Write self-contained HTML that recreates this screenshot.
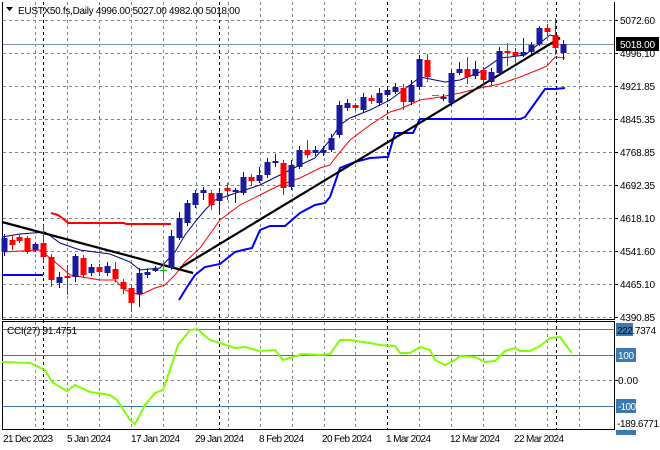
<!DOCTYPE html>
<html><head><meta charset="utf-8"><style>
html,body{margin:0;padding:0;background:#fff;width:660px;height:450px;overflow:hidden}
svg{display:block}
text{font-family:"Liberation Sans",sans-serif;font-size:10px;fill:#000}
</style></head><body>
<svg width="660" height="450" viewBox="0 0 660 450" xmlns="http://www.w3.org/2000/svg">
<rect width="660" height="450" fill="#fff"/>
<g stroke="#7a8590" stroke-width="1" stroke-dasharray="3,3" fill="none">
<path d="M3 20.5H614M3 53.5H614M3 86.5H614M3 119.5H614M3 152.5H614M3 185.5H614M3 218.5H614M3 251.5H614M3 284.5H614M3 317.5H614"/>
<path d="M35.5 2V319M67.5 2V319M99.5 2V319M131.5 2V319M163.5 2V319M196.5 2V319M228.5 2V319M260.5 2V319M292.5 2V319M324.5 2V319M355.5 2V319M419.5 2V319M451.5 2V319M483.5 2V319M515.5 2V319M547.5 2V319M579.5 2V319"/>
<path d="M35.5 322V429M67.5 322V429M99.5 322V429M131.5 322V429M163.5 322V429M196.5 322V429M228.5 322V429M260.5 322V429M292.5 322V429M324.5 322V429M355.5 322V429M419.5 322V429M451.5 322V429M483.5 322V429M515.5 322V429M547.5 322V429M579.5 322V429"/>
<path d="M3 380.5H614"/>
</g>
<g stroke="#000" stroke-width="1" stroke-dasharray="3,3" fill="none">
<path d="M43.5 2V429M219.5 2V429M387.5 2V429M556.5 2V429"/>
</g>
<path d="M3 44.5H614" stroke="#8090a0" stroke-width="1"/>
<g stroke="#3a7ab0" stroke-width="1"><path d="M3 329.5H614M3 355.5H614M3 406.5H614"/></g>
<g stroke="#000" stroke-width="1" fill="none">
<path d="M2.5 2V319.5H614.5V2"/>
<path d="M2.5 321.5H614.5V429.5H2.5Z"/>
</g>
<polyline fill="none" stroke="#f00" stroke-width="2" points="51,213 58,215 66,221 68,223 124,223 126,224 171,224"/>
<polyline fill="none" stroke="#0000ff" stroke-width="2" points="2,275 43,275"/>
<polyline fill="none" stroke="#0000ff" stroke-width="2" points="179,300 187,287 195,275 205,267 220,264 235,252 243,250 252,248 260,230 270,226 285,226 300,213 315,205 325,203 330,197 340,168 355,162 370,158 385,157 388,157 395,133 413,133 420,119 520,119 525,117 545,89 555,89 565,88"/>
<polyline fill="none" stroke="#00008b" stroke-width="1" points="2,237 20,234 45,232 60,243 80,250 110,254 130,262 140,270 160,268 175,252 185,235 195,222 205,210 215,200 230,195 260,185 280,175 300,165 315,158 330,140 340,125 350,118 370,110 390,100 410,85 420,77 430,79 445,82 460,80 480,72 500,58 510,57 525,55 540,43 550,35 560,38"/>
<polyline fill="none" stroke="#f00" stroke-width="1" points="2,252 40,250 55,262 70,275 100,280 115,280 125,290 140,295 155,288 165,285 175,275 185,262 200,248 220,220 240,205 260,195 280,185 300,178 320,168 330,165 335,158 350,140 370,125 390,112 400,109 420,100 440,97 460,93 480,88 500,84 520,77 540,69 547,66 555,57 565,58"/>
<g stroke="#000" stroke-width="2.2"><path d="M2 222L193 273"/><path d="M180 268L560 38"/></g>
<g stroke-width="1">
<g stroke="#0000cc"><path d="M4.5 234V256M35.5 242V252M59.5 272V288M75.5 254V282M91.5 264V276M107.5 262V276M139.5 268V307M147.5 268V278M155.5 266V272M171.5 230V270M179.5 212V240M187.5 200V226M195.5 190V208M203.5 187V200M219.5 190V213M235.5 188V203M243.5 172V195M259.5 167V183M267.5 158V178M275.5 154V167M291.5 160V190M299.5 146V169M315.5 146V156M323.5 146V156M331.5 134V152M339.5 101V138M347.5 99V111M363.5 93V113M379.5 88V106M387.5 86V97M395.5 83V94M411.5 80V105M419.5 55V90M443.5 94V101M451.5 70V106M459.5 62V75M475.5 61V79M491.5 68V85M499.5 47V75M523.5 38V57M531.5 42V55M539.5 26V46M563.5 40V60"/></g>
<g fill="#1a1aa0"><rect x="1.5" y="238" width="6" height="14"/><rect x="32.5" y="244" width="6" height="6"/><rect x="56.5" y="277" width="6" height="6"/><rect x="72.5" y="256" width="6" height="21"/><rect x="88.5" y="267" width="6" height="6"/><rect x="104.5" y="266" width="6" height="7"/><rect x="136.5" y="273" width="6" height="21"/><rect x="144.5" y="272" width="6" height="3"/><rect x="152.5" y="269" width="6" height="2"/><rect x="168.5" y="236" width="6" height="32"/><rect x="176.5" y="218" width="6" height="20"/><rect x="184.5" y="203" width="6" height="20"/><rect x="192.5" y="193" width="6" height="12"/><rect x="200.5" y="190" width="6" height="3"/><rect x="216.5" y="193" width="6" height="8"/><rect x="232.5" y="190" width="6" height="2"/><rect x="240.5" y="177" width="6" height="16"/><rect x="256.5" y="175" width="6" height="6"/><rect x="264.5" y="162" width="6" height="13"/><rect x="272.5" y="161" width="6" height="2"/><rect x="288.5" y="165" width="6" height="22"/><rect x="296.5" y="150" width="6" height="17"/><rect x="312.5" y="150" width="6" height="3"/><rect x="320.5" y="150" width="6" height="3"/><rect x="328.5" y="138" width="6" height="12"/><rect x="336.5" y="105" width="6" height="30"/><rect x="344.5" y="103" width="6" height="5"/><rect x="360.5" y="97" width="6" height="13"/><rect x="376.5" y="93" width="6" height="10"/><rect x="384.5" y="90" width="6" height="5"/><rect x="392.5" y="87" width="6" height="5"/><rect x="408.5" y="85" width="6" height="17"/><rect x="416.5" y="59" width="6" height="28"/><rect x="440.5" y="97" width="6" height="2"/><rect x="448.5" y="73" width="6" height="30"/><rect x="456.5" y="69" width="6" height="4"/><rect x="472.5" y="69" width="6" height="7"/><rect x="488.5" y="72" width="6" height="10"/><rect x="496.5" y="51" width="6" height="22"/><rect x="520.5" y="52" width="6" height="3"/><rect x="528.5" y="45" width="6" height="7"/><rect x="536.5" y="28" width="6" height="16"/><rect x="560.5" y="44" width="6" height="9"/></g>
<g stroke="#f00"><path d="M12.5 236V250M19.5 234V243M27.5 236V254M43.5 225V262M51.5 254V287M67.5 265V295M83.5 255V278M99.5 264V276M115.5 262V282M123.5 279V294M131.5 285V312M211.5 190V210M227.5 183V200M251.5 174V186M283.5 160V195M307.5 140V158M355.5 103V110M371.5 95V104M403.5 84V110M427.5 54V82M467.5 57V84M483.5 67V86M507.5 43V66M515.5 48V62M547.5 24V36M555.5 18V55"/></g>
<g fill="#f00"><rect x="9.5" y="240" width="6" height="5"/><rect x="16.5" y="237" width="6" height="4"/><rect x="24.5" y="238" width="6" height="14"/><rect x="40.5" y="243" width="6" height="14"/><rect x="48.5" y="257" width="6" height="23"/><rect x="64.5" y="276" width="6" height="2"/><rect x="80.5" y="258" width="6" height="17"/><rect x="96.5" y="267" width="6" height="5"/><rect x="112.5" y="269" width="6" height="10"/><rect x="120.5" y="282" width="6" height="7"/><rect x="128.5" y="288" width="6" height="15"/><rect x="208.5" y="193" width="6" height="12"/><rect x="224.5" y="188" width="6" height="3"/><rect x="248.5" y="177" width="6" height="4"/><rect x="280.5" y="163" width="6" height="25"/><rect x="304.5" y="150" width="6" height="5"/><rect x="352.5" y="105" width="6" height="3"/><rect x="368.5" y="98" width="6" height="3"/><rect x="400.5" y="88" width="6" height="14"/><rect x="424.5" y="60" width="6" height="17"/><rect x="464.5" y="69" width="6" height="8"/><rect x="480.5" y="70" width="6" height="10"/><rect x="504.5" y="51" width="6" height="2"/><rect x="512.5" y="52" width="6" height="4"/><rect x="544.5" y="28" width="6" height="4"/><rect x="552.5" y="35" width="6" height="13"/></g>
<g stroke="#00c000"><path d="M160 270.5H167M163.5 263V280M432 95.5H439"/></g>
</g>
<polyline fill="none" stroke="#7fff00" stroke-width="2" points="2,362 30,363 45,370 52,382 67,391 75,385 90,392 110,395 117,400 130,420 135,424 145,405 155,393 163,390 170,370 178,345 190,330 197,329 210,340 220,343 235,348 245,347 260,351 275,350 283,360 290,358 302,354 320,355 330,354 340,340 350,340 370,343 380,345 395,346 400,353 410,353 420,347 430,350 435,360 445,365 455,360 460,356 475,357 485,362 495,361 505,351 515,348 520,351 530,351 540,346 550,338 560,337 565,344 572,353"/>
<g stroke="#000"><path d="M614 20.5h4M614 53.5h4M614 86.5h4M614 119.5h4M614 152.5h4M614 185.5h4M614 218.5h4M614 251.5h4M614 284.5h4M614 317.5h4M614 380.5h4"/></g>
<text x="620" y="24" textLength="35">5072.60</text>
<text x="620" y="57" textLength="35">4996.10</text>
<rect x="616" y="37" width="43" height="14" fill="#000"/>
<text x="620" y="48" textLength="35" style="fill:#fff">5018.00</text>
<text x="620" y="90" textLength="35">4921.85</text>
<text x="620" y="123" textLength="35">4845.35</text>
<text x="620" y="156" textLength="35">4768.85</text>
<text x="620" y="189" textLength="35">4692.35</text>
<text x="620" y="222" textLength="35">4618.10</text>
<text x="620" y="255" textLength="35">4541.60</text>
<text x="620" y="288" textLength="35">4465.10</text>
<text x="620" y="321" textLength="35">4390.85</text>
<rect x="616" y="323" width="17" height="13" fill="#3a7ab0"/>
<text x="617" y="334" textLength="39">222.7374</text>
<rect x="616" y="348" width="20" height="14" fill="#3a7ab0"/>
<text x="618" y="359" textLength="16" style="fill:#fff">100</text>
<text x="618" y="384" textLength="20">0.00</text>
<rect x="616" y="399" width="20" height="14" fill="#3a7ab0"/>
<text x="618" y="410" textLength="18" style="fill:#fff">-100</text>
<rect x="616" y="430" width="20" height="5" fill="#3a7ab0"/>
<text x="617" y="427" textLength="42">-189.6771</text>
<path d="M6 7h7l-3.5 4z" fill="#000"/>
<text x="18" y="14" textLength="222">EUSTX50.fs,Daily  4996.00 5027.00 4982.00 5018.00</text>
<text x="7" y="334" textLength="70">CCI(27) 91.4751</text>
<text x="3" y="442" textLength="50">21 Dec 2023</text>
<text x="67" y="442" textLength="44">5 Jan 2024</text>
<text x="131" y="442" textLength="49">17 Jan 2024</text>
<text x="195" y="442" textLength="49">29 Jan 2024</text>
<text x="259" y="442" textLength="45">8 Feb 2024</text>
<text x="322" y="442" textLength="50">20 Feb 2024</text>
<text x="386" y="442" textLength="45">1 Mar 2024</text>
<text x="450" y="442" textLength="50">12 Mar 2024</text>
<text x="514" y="442" textLength="50">22 Mar 2024</text>
</svg>
</body></html>
